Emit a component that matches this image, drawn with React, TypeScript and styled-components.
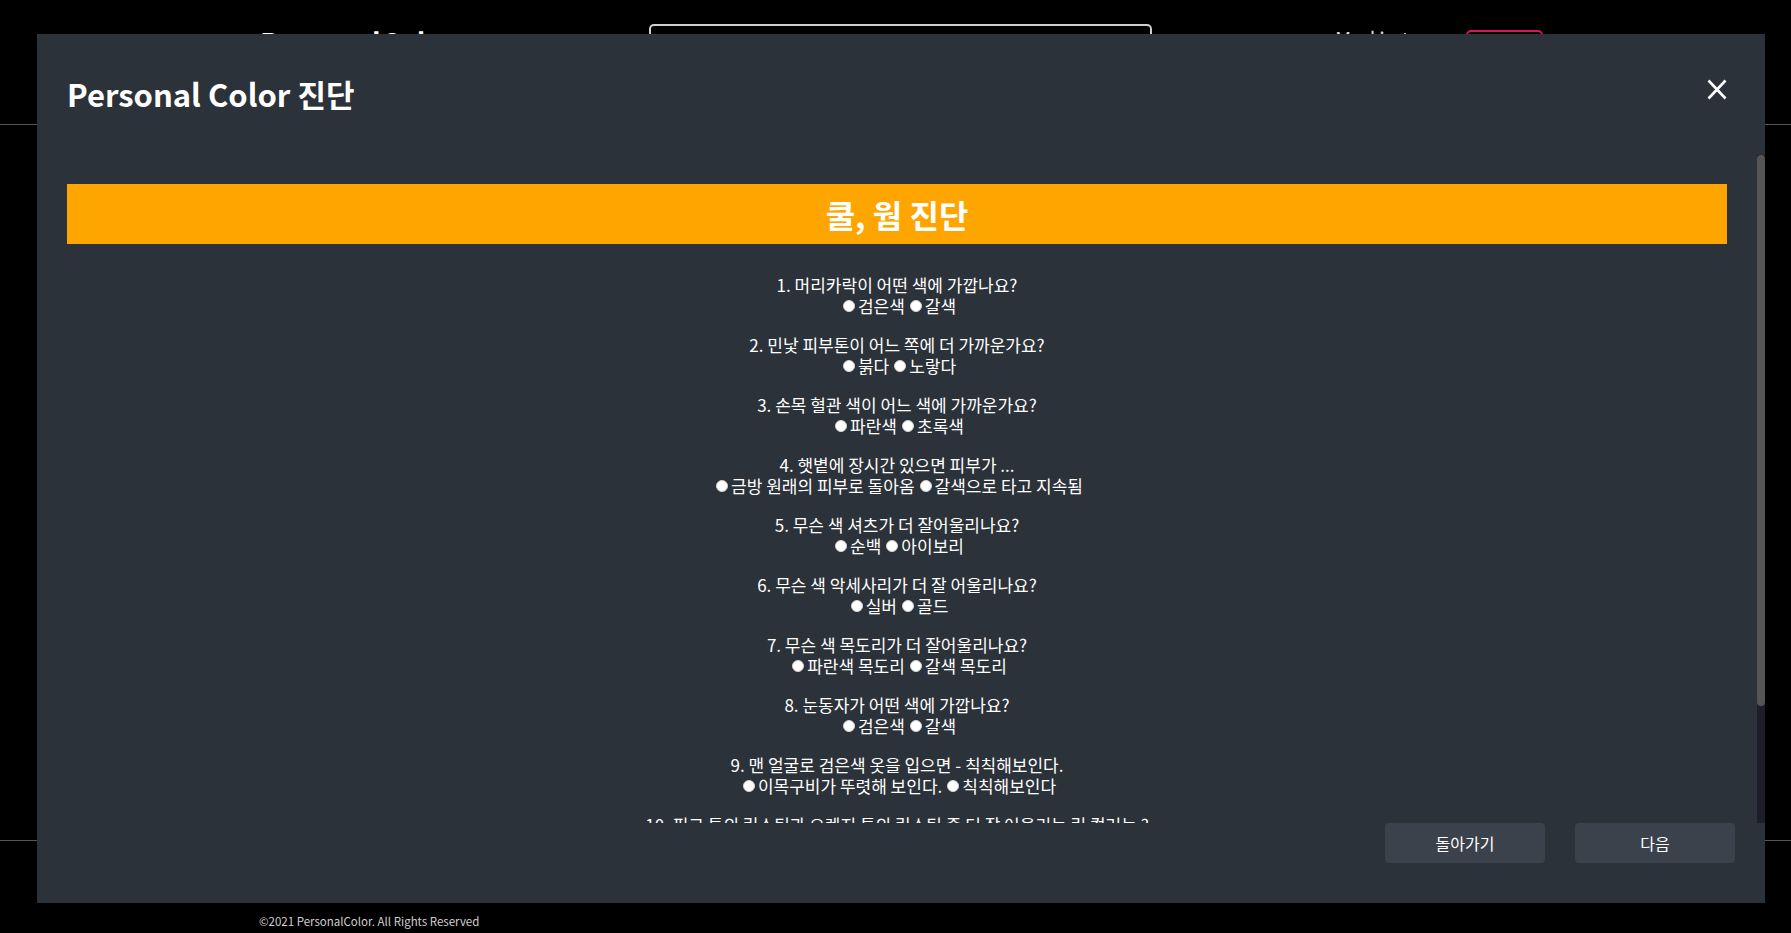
import React from "react";
import styled, { createGlobalStyle } from "styled-components";

const GlobalStyle = createGlobalStyle`
  html, body { margin: 0; padding: 0; background: #000; }
  body {
    font-family: "Noto Sans CJK KR", "Noto Sans", sans-serif;
    color: #fff;
    overflow: hidden;
  }
  * { box-sizing: border-box; }
`;

const Page = styled.div`
  min-height: 933px;
  background: #000;
  display: flex;
  flex-direction: column;
`;

const Header = styled.header`
  height: 125px;
  border-bottom: 1px solid #555;
  display: grid;
  grid-template-columns: 389px 503px 1fr;
  align-items: start;
  padding-left: 260px;
`;

const Logo = styled.div`
  margin-top: 28px;
  font-size: 28px;
  line-height: 28px;
  font-weight: 700;
  color: #fff;
`;

const Search = styled.div`
  margin-top: 24px;
  height: 44px;
  border: 2px solid #cfcfcf;
  border-radius: 5px;
`;

const Nav = styled.nav`
  display: flex;
  align-items: flex-start;
  padding-left: 183px;
`;

const NavText = styled.span`
  margin-top: 29px;
  font-size: 20px;
  line-height: 20px;
  letter-spacing: 4px;
  color: #ddd;
`;

const LoginButton = styled.div`
  margin-top: 30px;
  margin-left: auto;
  margin-right: 248px;
  width: 77px;
  height: 36px;
  border: 2px solid #d6175b;
  border-radius: 5px;
`;

const Main = styled.main`
  height: 715px;
  flex: none;
`;

const Footer = styled.footer`
  border-top: 1px solid #555;
  padding: 72px 0 20px 259px;
  font-size: 11.5px;
  line-height: 16px;
  color: #cfcfcf;
`;

const Modal = styled.div`
  position: fixed;
  top: 34px;
  left: 37px;
  width: 1728px;
  height: 869px;
  background: #2c323a;
  display: flex;
  flex-direction: column;
`;

const ModalHeader = styled.div`
  height: 121px;
  flex: none;
  display: flex;
  justify-content: space-between;
  align-items: flex-start;
  padding: 40px 38px 0 30px;
`;

const Title = styled.h2`
  margin: 0;
  font-size: 31px;
  line-height: 40px;
  font-weight: 700;
  color: #fff;
`;

const CloseButton = styled.button`
  margin-top: 5px;
  width: 20px;
  height: 21px;
  padding: 0;
  border: none;
  background: transparent;
  cursor: pointer;
  display: block;
`;

const ScrollRegion = styled.div`
  flex: 1;
  min-height: 0;
  display: flex;
`;

const ScrollContent = styled.div`
  flex: 1;
  min-width: 0;
  overflow: hidden;
  padding: 29px 30px 0 30px;
`;

const ScrollTrack = styled.div`
  width: 8px;
  flex: none;
  background: #1e1d2b;
  display: flex;
  flex-direction: column;
`;

const ScrollThumb = styled.div`
  height: 551px;
  background: #555;
  border-radius: 4px;
`;

const Banner = styled.div`
  height: 60px;
  background: #ffa500;
  color: #fff;
  font-size: 32px;
  line-height: 60px;
  font-weight: 700;
  text-align: center;
  margin-bottom: 30px;
`;

const QuestionList = styled.div`
  display: flex;
  flex-direction: column;
  gap: 18px;
`;

const Question = styled.div`
  text-align: center;
  font-size: 17px;
  line-height: 21px;
  color: #fff;
`;

const Options = styled.div`
  white-space: nowrap;
`;

const Radio = styled.input`
  appearance: none;
  -webkit-appearance: none;
  display: inline-block;
  width: 12px;
  height: 12px;
  margin: 0 3px 0 5px;
  border-radius: 50%;
  background: #fff;
  border: 1px solid #d4d4d4;
  vertical-align: 1px;
`;

const ModalFooter = styled.div`
  height: 80px;
  flex: none;
  display: flex;
  justify-content: flex-end;
  align-items: flex-start;
  gap: 30px;
  padding: 0 30px 40px;
`;

const ActionButton = styled.button`
  width: 160px;
  height: 40px;
  border: none;
  border-radius: 4px;
  background: #3b424b;
  color: #fff;
  font-family: "Noto Sans CJK KR", "Noto Sans", sans-serif;
  font-size: 16px;
  cursor: pointer;
`;

const questions: { q: string; options: string[] }[] = [
  { q: "1. 머리카락이 어떤 색에 가깝나요?", options: ["검은색", "갈색"] },
  { q: "2. 민낯 피부톤이 어느 쪽에 더 가까운가요?", options: ["붉다", "노랗다"] },
  { q: "3. 손목 혈관 색이 어느 색에 가까운가요?", options: ["파란색", "초록색"] },
  { q: "4. 햇볕에 장시간 있으면 피부가 ...", options: ["금방 원래의 피부로 돌아옴", "갈색으로 타고 지속됨"] },
  { q: "5. 무슨 색 셔츠가 더 잘어울리나요?", options: ["순백", "아이보리"] },
  { q: "6. 무슨 색 악세사리가 더 잘 어울리나요?", options: ["실버", "골드"] },
  { q: "7. 무슨 색 목도리가 더 잘어울리나요?", options: ["파란색 목도리", "갈색 목도리"] },
  { q: "8. 눈동자가 어떤 색에 가깝나요?", options: ["검은색", "갈색"] },
  { q: "9. 맨 얼굴로 검은색 옷을 입으면 - 칙칙해보인다.", options: ["이목구비가 뚜렷해 보인다.", "칙칙해보인다"] },
  { q: "10. 핑크 톤의 립스틱과 오렌지 톤의 립스틱 중 더 잘 어울리는 립 컬러는 ?", options: ["핑크 톤", "오렌지 톤"] },
];

export default function App() {
  return (
    <>
      <GlobalStyle />
      <Page>
        <Header>
          <Logo>PersonalColor</Logo>
          <Search />
          <Nav>
            <NavText>Mylist</NavText>
            <LoginButton />
          </Nav>
        </Header>
        <Main />
        <Footer>©2021 PersonalColor. All Rights Reserved</Footer>
      </Page>
      <Modal role="dialog">
        <ModalHeader>
          <Title>Personal Color 진단</Title>
          <CloseButton aria-label="닫기">
            <svg width="20" height="21" viewBox="0 0 20 21">
              <line x1="1.5" y1="1.5" x2="18.5" y2="19.5" stroke="#fff" strokeWidth="2.6" />
              <line x1="18.5" y1="1.5" x2="1.5" y2="19.5" stroke="#fff" strokeWidth="2.6" />
            </svg>
          </CloseButton>
        </ModalHeader>
        <ScrollRegion>
          <ScrollContent>
            <Banner>쿨, 웜 진단</Banner>
            <QuestionList>
              {questions.map((item, i) => (
                <Question key={i}>
                  <div>{item.q}</div>
                  <Options>
                    {item.options.map((opt, j) => (
                      <React.Fragment key={j}>
                        <Radio type="radio" name={`q${i}`} value={opt} />
                        {opt}
                      </React.Fragment>
                    ))}
                  </Options>
                </Question>
              ))}
            </QuestionList>
          </ScrollContent>
          <ScrollTrack aria-hidden="true">
            <ScrollThumb />
          </ScrollTrack>
        </ScrollRegion>
        <ModalFooter>
          <ActionButton>돌아가기</ActionButton>
          <ActionButton>다음</ActionButton>
        </ModalFooter>
      </Modal>
    </>
  );
}
